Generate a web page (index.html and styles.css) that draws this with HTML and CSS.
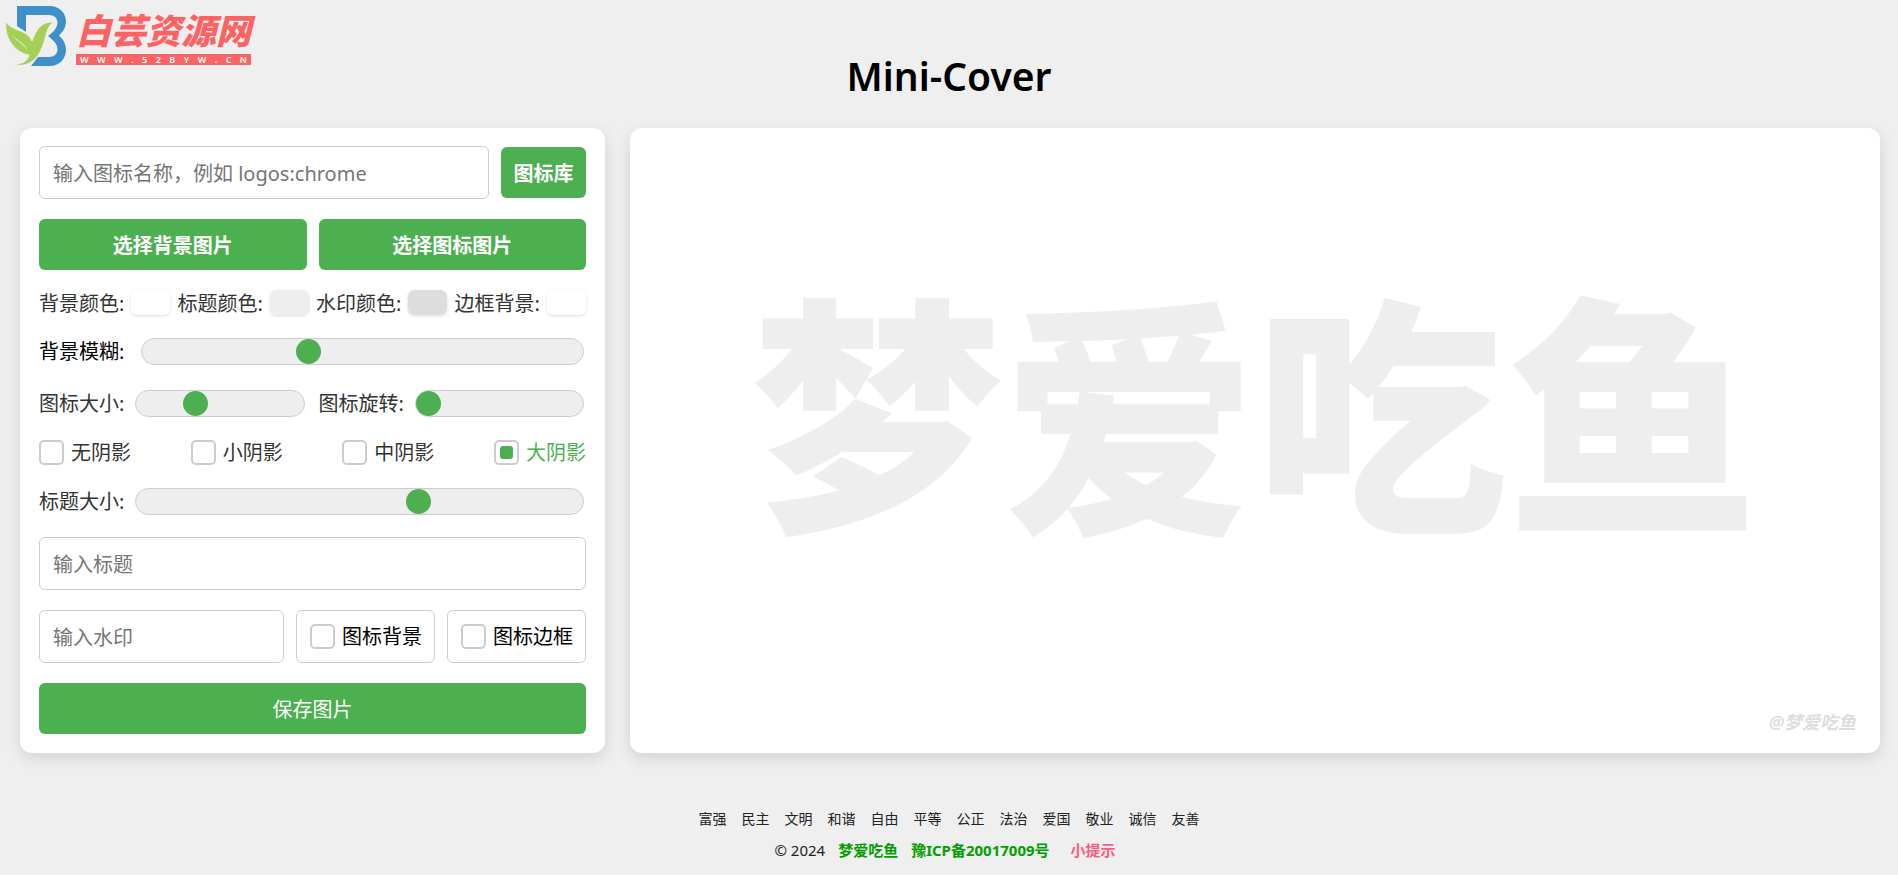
FILE: index.html
```html
<!DOCTYPE html>
<html lang="zh-CN">
<head>
<meta charset="UTF-8">
<meta name="viewport" content="width=device-width, initial-scale=1">
<title>Mini-Cover</title>
<link rel="stylesheet" href="styles.css">
</head>
<body>
<a class="logo" href="#">
  <svg class="logo-mark" viewBox="0 0 64 62" width="64" height="62" aria-hidden="true">
    <path class="logo-b" d="M17 0H50C59 0 66 7 66 15.500C66 21 63 26 59 29.500C63 33 66 38 66 44C66 53 59 60 50 60H31L38 51H49C54 51 57.500 48 57.500 43.500C57.500 38 54 35 48 30C54 26 57.500 21 57.500 16.500C57.500 12 54 9 49 9H26V26L17 20Z"/>
    <path class="logo-leaf" d="M6 14C7 20 12 21 18 24C26 27 30 30 32 35C36 24 41 15 54 16C47 20 47 27 44 36C40 49 33 62 13 59C22 58 28 55 29 49C19 48 3 35 6 14Z"/>
    <path class="logo-vein" d="M11 26C13 34 25 35 28 46C24 36 14 36 11 26Z"/>
  </svg>
  <span class="logo-text">
    <span class="logo-name">白芸资源网</span>
    <span class="logo-url">W W W . 5 2 B Y W . C N</span>
  </span>
</a>

<h1 class="title">Mini-Cover</h1>

<main class="layout">
  <form class="panel">
    <div class="row">
      <input class="field grow" type="text" aria-label="图标名称" placeholder="输入图标名称，例如 logos:chrome">
      <button class="btn btn-lib" type="button">图标库</button>
    </div>
    <div class="row">
      <button class="btn grow" type="button">选择背景图片</button>
      <button class="btn grow" type="button">选择图标图片</button>
    </div>
    <div class="colors">
      <label class="color">背景颜色:<input class="swatch" type="color" value="#ffffff"></label>
      <label class="color">标题颜色:<input class="swatch" type="color" value="#eeeeee"></label>
      <label class="color">水印颜色:<input class="swatch" type="color" value="#dddddd"></label>
      <label class="color">边框背景:<input class="swatch" type="color" value="#ffffff"></label>
    </div>
    <div class="slider">
      <label class="slider-label wide" for="blur">背景模糊:</label>
      <input class="range" id="blur" type="range" min="0" max="100" value="37">
    </div>
    <div class="row">
      <div class="slider grow">
        <label class="slider-label" for="icon-size">图标大小:</label>
        <input class="range" id="icon-size" type="range" min="0" max="100" value="33">
      </div>
      <div class="slider grow">
        <label class="slider-label" for="icon-rotate">图标旋转:</label>
        <input class="range" id="icon-rotate" type="range" min="0" max="360" value="0">
      </div>
    </div>
    <div class="shadows">
      <label class="check"><input class="box" type="radio" name="shadow"><span>无阴影</span></label>
      <label class="check"><input class="box" type="radio" name="shadow"><span>小阴影</span></label>
      <label class="check"><input class="box" type="radio" name="shadow"><span>中阴影</span></label>
      <label class="check"><input class="box" type="radio" name="shadow" checked><span>大阴影</span></label>
    </div>
    <div class="slider">
      <label class="slider-label" for="title-size">标题大小:</label>
      <input class="range" id="title-size" type="range" min="0" max="100" value="64">
    </div>
    <input class="field" type="text" aria-label="标题" placeholder="输入标题">
    <div class="row">
      <input class="field grow" type="text" aria-label="水印" placeholder="输入水印">
      <label class="check framed"><input class="box" type="checkbox"><span>图标背景</span></label>
      <label class="check framed"><input class="box" type="checkbox"><span>图标边框</span></label>
    </div>
    <button class="btn btn-save" type="button">保存图片</button>
  </form>

  <section class="preview">
    <div class="preview-title">梦爱吃鱼</div>
    <div class="watermark">@梦爱吃鱼</div>
  </section>
</main>

<footer class="footer">
  <div class="values">
    <span>富强</span><span>民主</span><span>文明</span><span>和谐</span><span>自由</span><span>平等</span><span>公正</span><span>法治</span><span>爱国</span><span>敬业</span><span>诚信</span><span>友善</span>
  </div>
  <div class="legal">
    <span>© 2024</span>
    <a class="site" href="#">梦爱吃鱼</a>
    <a class="site" href="#">豫ICP备20017009号</a>
    <a class="tip" href="#">小提示</a>
  </div>
</footer>
</body>
</html>
```
FILE: styles.css
```css
* {
  box-sizing: border-box;
}

body {
  margin: 0;
  background: #efefef;
  color: #000;
  font-family: "Noto Sans", "Noto Sans CJK SC", sans-serif;
  font-size: 20px;
  line-height: 25px;
}

a {
  text-decoration: none;
}

.logo {
  position: absolute;
  top: 6px;
  left: 0;
  display: flex;
  gap: 12px;
}

.logo-mark {
  overflow: visible;
}

.logo-b {
  fill: #3f8fc8;
}

.logo-leaf {
  fill: #a5cf55;
  stroke: #efefef;
  stroke-width: 1;
}

.logo-vein {
  fill: #efefef;
}

.logo-text {
  display: flex;
  flex-direction: column;
  width: 175px;
}

.logo-name {
  height: 48px;
  color: #fc6364;
  font-family: "Noto Sans CJK SC", sans-serif;
  font-size: 35px;
  font-style: italic;
  font-weight: 900;
  line-height: 46px;
  white-space: nowrap;
}

.logo-url {
  padding: 0 4px;
  background: #fc6364;
  color: #fff;
  font-size: 9px;
  font-weight: 600;
  line-height: 11px;
  text-align-last: justify;
}

.title {
  margin: 0;
  padding: 46px 0 22px;
  font-size: 39px;
  font-weight: 600;
  line-height: 60px;
  text-align: center;
}

.layout {
  display: grid;
  grid-template-columns: minmax(0, 117fr) minmax(0, 250fr);
  gap: 25px;
  padding: 0 18px 0 20px;
}

.panel,
.preview {
  border-radius: 12px;
  background: #fff;
  box-shadow: 0 5px 15px rgba(0, 0, 0, 0.12);
}

.panel {
  display: flex;
  flex-direction: column;
  gap: 20px;
  padding: 18px 19px 19px;
}

.row {
  display: flex;
  align-items: center;
  gap: 12px;
}

.grow {
  flex: 1;
  min-width: 0;
}

.field,
.btn {
  border-radius: 6px;
  font-family: inherit;
  font-size: 20px;
  line-height: 25px;
}

.field {
  height: 53px;
  padding: 2px 13px 0;
  border: 1px solid #ccc;
  background: #fff;
}

.field::placeholder {
  color: #757575;
}

.btn {
  height: 51px;
  padding: 2px 12px 0;
  border: 0;
  background: #4caf50;
  color: #fff;
  font-weight: 600;
}

.btn-lib {
  width: 85px;
}

.btn-save {
  font-weight: 400;
}

.colors,
.shadows {
  display: flex;
  justify-content: space-between;
  color: #333;
}

.color {
  display: flex;
  gap: 7px;
  line-height: 27px;
  height: 25px;
  white-space: nowrap;
}

.swatch {
  width: 39px;
  height: 25px;
  padding: 0;
  border: 0;
  border-radius: 6px;
  background: none;
  box-shadow: 0 1px 3px rgba(0, 0, 0, 0.15);
  appearance: none;
}

.swatch::-webkit-color-swatch-wrapper {
  padding: 0;
}

.swatch::-webkit-color-swatch {
  border: 0;
  border-radius: 6px;
}

.slider {
  display: flex;
  align-items: center;
  padding: 3px 0 2px;
}

.slider-label {
  flex: 0 0 94px;
  color: #333;
}

.slider-label.wide {
  flex-basis: 100px;
  color: #000;
}

.range {
  flex: 1;
  min-width: 0;
  height: 27px;
  margin: 0 2px;
  border: 1px solid #ccc;
  border-radius: 14px;
  background: #eee;
  appearance: none;
}

.range::-webkit-slider-thumb {
  width: 25px;
  height: 25px;
  border-radius: 50%;
  background: #4caf50;
  appearance: none;
}

.shadows {
  height: 26px;
  align-items: center;
}

.check {
  display: flex;
  align-items: center;
  gap: 7px;
  white-space: nowrap;
}

.framed {
  height: 53px;
  padding: 0 12px 0 13px;
  border: 1px solid #ccc;
  border-radius: 6px;
}

.box {
  display: grid;
  place-content: center;
  width: 25px;
  height: 25px;
  margin: 0;
  border: 2px solid #ccc;
  border-radius: 5px;
  background: #fff;
  appearance: none;
}

.box:checked::before {
  width: 13px;
  height: 13px;
  border-radius: 3px;
  background: #4caf50;
  content: "";
}

.box:checked + span {
  color: #4caf50;
}

.preview {
  position: relative;
  display: flex;
  align-items: center;
  justify-content: center;
  overflow: hidden;
}

.preview-title {
  padding-bottom: 72px;
  color: #eee;
  font-family: "Noto Sans CJK SC", sans-serif;
  font-size: 252px;
  font-weight: 900;
  line-height: 300px;
  white-space: nowrap;
}

.watermark {
  position: absolute;
  right: 24px;
  bottom: 18px;
  color: #ddd;
  font-size: 18px;
  font-style: italic;
  font-weight: 600;
}

.footer {
  padding: 53px 0 8px;
  font-size: 14px;
  text-align: center;
}

.values,
.legal {
  display: flex;
  justify-content: center;
}

.values {
  gap: 15px;
  color: #222;
}

.legal {
  gap: 13px;
  padding-top: 7px;
  padding-right: 8px;
  color: #222;
  font-size: 15px;
}

.site {
  color: #00a000;
  font-weight: 700;
}

.tip {
  padding-left: 8px;
  color: #ff5c7c;
  font-weight: 700;
}
```
